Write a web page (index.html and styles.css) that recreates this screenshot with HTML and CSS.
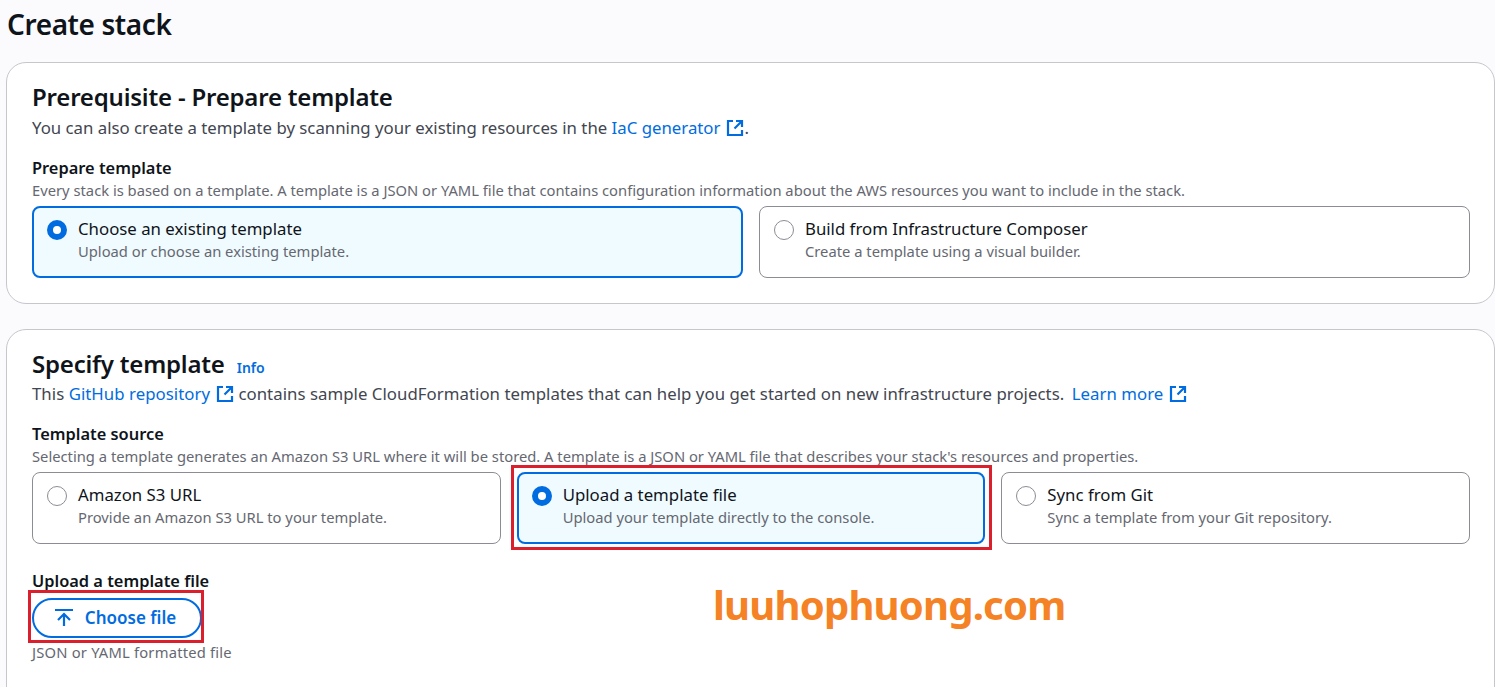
FILE: index.html
```html
<!DOCTYPE html>
<html lang="en">
<head>
    <meta charset="UTF-8">
    <meta name="viewport" content="width=device-width, initial-scale=1.0">
    <title>Create stack</title>
    <link rel="stylesheet" href="styles.css">
</head>
<body>
    <svg class="sprite" width="0" height="0" aria-hidden="true">
        <symbol id="external" viewBox="0 0 18 18">
            <path d="M7 2H2v14h14v-5M10 2h6v6M16 2L8.500 9.500" fill="none" stroke="currentColor" stroke-width="2.2"/>
        </symbol>
    </svg>

    <div class="page">
        <h1>Create stack</h1>

        <!-- Prerequisite -->
        <section class="card card-first">
            <h2>Prerequisite - Prepare template</h2>
            <p class="intro">You can also create a template by scanning your existing resources in the <a href="#">IaC generator<svg class="ext"><use href="#external"/></svg></a>.</p>

            <div class="field-label">Prepare template</div>
            <div class="field-desc">Every stack is based on a template. A template is a JSON or YAML file that contains configuration information about the AWS resources you want to include in the stack.</div>
            <div class="tiles">
                <div class="tile selected">
                    <span class="radio"></span>
                    <div>
                        <div class="tile-title">Choose an existing template</div>
                        <div class="tile-desc">Upload or choose an existing template.</div>
                    </div>
                </div>
                <div class="tile">
                    <span class="radio"></span>
                    <div>
                        <div class="tile-title">Build from Infrastructure Composer</div>
                        <div class="tile-desc">Create a template using a visual builder.</div>
                    </div>
                </div>
            </div>
        </section>

        <!-- Specify template -->
        <section class="card">
            <h2>Specify template <a class="info" href="#">Info</a></h2>
            <p class="intro intro-wide">This <a href="#">GitHub repository<svg class="ext"><use href="#external"/></svg></a> contains sample CloudFormation templates that can help you get started on new infrastructure projects. <a class="learn" href="#">Learn more<svg class="ext"><use href="#external"/></svg></a></p>

            <div class="field-label">Template source</div>
            <div class="field-desc">Selecting a template generates an Amazon S3 URL where it will be stored. A template is a JSON or YAML file that describes your stack's resources and properties.</div>
            <div class="tiles tiles-three">
                <div class="tile">
                    <span class="radio"></span>
                    <div>
                        <div class="tile-title">Amazon S3 URL</div>
                        <div class="tile-desc">Provide an Amazon S3 URL to your template.</div>
                    </div>
                </div>
                <div class="tile selected marked">
                    <span class="radio"></span>
                    <div>
                        <div class="tile-title">Upload a template file</div>
                        <div class="tile-desc">Upload your template directly to the console.</div>
                    </div>
                </div>
                <div class="tile">
                    <span class="radio"></span>
                    <div>
                        <div class="tile-title">Sync from Git</div>
                        <div class="tile-desc">Sync a template from your Git repository.</div>
                    </div>
                </div>
            </div>

            <div class="field-label upload-label">Upload a template file</div>
            <button class="file-btn" type="button">
                <svg width="18" height="18" viewBox="0 0 18 18"><path d="M0 2h18M9 18V6M3 12l6-6 6 6" fill="none" stroke="currentColor" stroke-width="2.2"/></svg>
                Choose file
            </button>
            <div class="file-hint">JSON or YAML formatted file</div>
        </section>

        <div class="watermark">luuhophuong.com</div>
    </div>
</body>
</html>
```

FILE: styles.css
```css
/* Page */
html {
    overflow: hidden;
}
body {
    margin: 0;
    height: 687px;
    overflow: hidden;
    background-color: #fbfbfe;
    color: #0f141a;
    font-family: "Noto Sans", Arial, sans-serif;
    font-size: 16px;
}
.sprite {
    position: absolute;
}
.page {
    position: relative;
    height: 687px;
    overflow: hidden;
    padding: 0 0 0 6px;
    box-sizing: border-box;
}
h1 {
    margin: 0;
    padding: 6px 0 0 1px;
    height: 62px;
    box-sizing: border-box;
    font-size: 28px;
    line-height: 36px;
    font-weight: 600;
    letter-spacing: -0.4px;
}

/* Cards */
.card {
    background: #fff;
    border: 1px solid #c6c6cd;
    border-radius: 20px;
    padding: 19px 24px 0 25px;
    height: 400px;
}
.card-first {
    height: 242px;
    box-sizing: border-box;
    margin-bottom: 25px;
}
h2 {
    margin: 0;
    height: 30px;
    font-size: 24px;
    line-height: 30px;
    font-weight: 600;
    letter-spacing: -0.2px;
}
.card-first h2 {
    height: 31px;
}
.info {
    margin-left: 6px;
    font-size: 14px;
    line-height: 1;
    font-weight: 600;
    letter-spacing: 0;
    color: #006ce0;
    text-decoration: none;
}
.intro {
    margin: 0;
    font-size: 16.8px;
    line-height: 30px;
    color: #424650;
}
.intro-wide {
    letter-spacing: 0.04px;
}
.intro a {
    color: #006ce0;
    text-decoration: none;
}
.intro .learn {
    margin-left: 3px;
}
.ext {
    width: 18px;
    height: 18px;
    margin-left: 6px;
    vertical-align: -3px;
}
.field-label {
    margin-top: 13px;
    font-size: 16.4px;
    line-height: 24px;
    font-weight: 600;
}
.field-desc {
    font-size: 14.75px;
    line-height: 21px;
    color: #656871;
}

/* Radio tiles */
.tiles {
    display: grid;
    grid-template-columns: 1fr 1fr;
    gap: 16px;
    margin-top: 5px;
}
.tiles-three {
    grid-template-columns: 1fr 1fr 1fr;
}
.tile {
    position: relative;
    display: flex;
    gap: 11px;
    height: 72px;
    box-sizing: border-box;
    padding: 10px 14px;
    background: #fff;
    border: 1px solid #8c8c94;
    border-radius: 8px;
}
.tile.selected {
    background: #f0fbff;
    border: 2px solid #006ce0;
    padding: 9px 13px;
}
.radio {
    flex: none;
    width: 20px;
    height: 20px;
    margin-top: 3px;
    box-sizing: border-box;
    background: #fff;
    border: 1px solid #8c8c94;
    border-radius: 50%;
}
.selected .radio {
    border: 6px solid #006ce0;
}
.tile-title {
    font-size: 16.8px;
    line-height: 24px;
}
.tile-desc {
    font-size: 14.75px;
    line-height: 20px;
    color: #656871;
}
.marked::after {
    content: "";
    position: absolute;
    left: -8px;
    top: -9px;
    right: -9px;
    bottom: -8px;
    border: 3px solid #d9202c;
}

/* File upload */
.upload-label {
    margin-top: 25px;
}
.file-btn {
    position: relative;
    display: flex;
    align-items: center;
    justify-content: center;
    gap: 12px;
    width: 170px;
    height: 40px;
    margin-top: 5px;
    padding: 0 3px 2px 0;
    background: #fff;
    border: 2px solid #006ce0;
    border-radius: 20px;
    color: #006ce0;
    font-family: inherit;
    font-size: 17px;
    font-weight: 600;
}
.file-btn::after {
    content: "";
    position: absolute;
    left: -6px;
    top: -10px;
    right: -4px;
    bottom: -7px;
    border: 3px solid #d9202c;
}
.file-hint {
    margin-top: 3px;
    font-size: 14.75px;
    line-height: 22px;
    letter-spacing: 0.2px;
    color: #656871;
}

/* Watermark over the form */
.watermark {
    position: absolute;
    left: 713px;
    top: 578px;
    font-size: 40px;
    line-height: 54px;
    font-weight: 700;
    letter-spacing: -0.8px;
    color: #f58225;
    white-space: nowrap;
}
```
